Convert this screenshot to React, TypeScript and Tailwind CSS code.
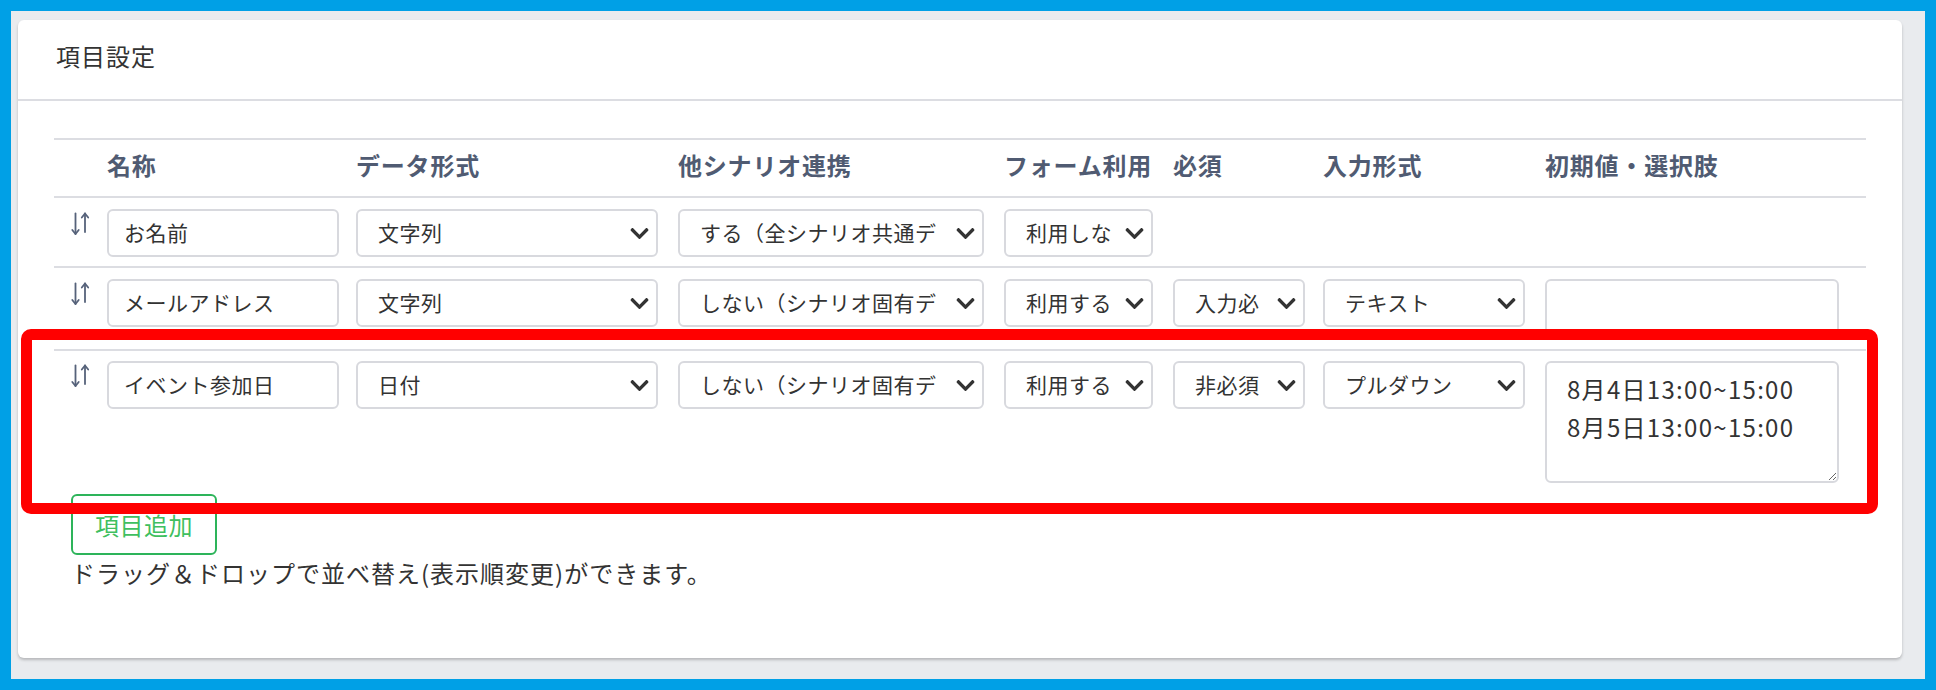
import React from "react";
import { FaChevronDown } from "react-icons/fa";

const FONT = "font-['Noto_Sans_CJK_JP','Noto_Sans',sans-serif]";

function DragIcon() {
  return (
    <svg width="19" height="24" viewBox="0 0 19 24" fill="none" stroke="#56627a" strokeWidth="1.8" strokeLinecap="round" strokeLinejoin="round">
      <line x1="4.5" y1="1.5" x2="4.5" y2="22" />
      <polyline points="1.3,18 4.5,22 7.7,18" />
      <line x1="14" y1="1.5" x2="14" y2="20" />
      <polyline points="10.8,5.5 14,1.5 17.2,5.5" />
    </svg>
  );
}

function TextInput({ value, w }: { value: string; w: string }) {
  return (
    <div className={`${w} h-[48px] border-2 border-[#d8d9de] rounded-[6px] bg-white flex items-center pl-[15px] text-[21px] tracking-[0.5px] text-[#333] whitespace-nowrap overflow-hidden`}>
      {value}
    </div>
  );
}

function Select({ value, w }: { value: string; w: string }) {
  return (
    <div className={`${w} h-[48px] border-2 border-[#d8d9de] rounded-[6px] bg-white flex items-center pl-[20px] text-[21px] tracking-[0.5px] text-[#333]`}>
      <span className="flex-1 min-w-0 overflow-hidden whitespace-nowrap">{value}</span>
      <span className="shrink-0 ml-[8px] mr-[6px] flex items-center text-[#333]">
        <FaChevronDown size={21} />
      </span>
    </div>
  );
}

function Area({ value, w, h }: { value: string; w: string; h: string }) {
  return (
    <textarea
      readOnly
      defaultValue={value}
      className={`${w} ${h} block border-2 border-[#d8d9de] rounded-[6px] bg-white pt-[7px] px-[20px] text-[24px] tracking-[1.3px] leading-[38px] text-[#333] outline-none overflow-hidden`}
    />
  );
}

const GRID = "grid grid-cols-[53px_249px_322px_326px_169px_150px_222px_321px]";

export default function App() {
  const headers = ["", "名称", "データ形式", "他シナリオ連携", "フォーム利用", "必須", "入力形式", "初期値・選択肢"];
  return (
    <div className={`relative w-[1936px] h-[690px] bg-[#00a0e6] p-[11px] ${FONT}`}>
      <div className="w-full h-full bg-[#e9ebee] pt-[9px] pl-[7px] pr-[23px] pb-[21px]">
        <div className="w-full h-full bg-white rounded-[6px] shadow-[0_2px_3px_rgba(0,0,0,0.22)] flex flex-col">
          <div className="h-[81px] border-b-2 border-[#dcdde2] flex items-center pl-[38px] pb-[8px] text-[24px] tracking-[1px] text-[#333]">
            項目設定
          </div>
          <div className="px-[36px] pt-[37px]">
            <div className="border-t-2 border-[#dcdde2]">
              <div className={`${GRID} h-[58px] items-center pb-[6px] text-[24px] tracking-[0.8px] font-bold text-[#505b72] border-b-2 border-[#dcdde2]`}>
                {headers.map((h, i) => (
                  <div key={i} className="whitespace-nowrap">{h}</div>
                ))}
              </div>
              {/* row 1 */}
              <div className={`${GRID} items-start pt-[11px] pb-[9px] border-b-2 border-[#dcdde2]`}>
                <div className="pl-[17px] pt-[3px]"><DragIcon /></div>
                <TextInput value="お名前" w="w-[232px]" />
                <Select value="文字列" w="w-[302px]" />
                <Select value="する（全シナリオ共通デ" w="w-[306px]" />
                <Select value="利用しな" w="w-[149px]" />
                <div />
                <div />
                <div />
              </div>
              {/* row 2 */}
              <div className={`${GRID} items-start pt-[11px] pb-[9px] border-b-2 border-[#dcdde2]`}>
                <div className="pl-[17px] pt-[3px]"><DragIcon /></div>
                <TextInput value="メールアドレス" w="w-[232px]" />
                <Select value="文字列" w="w-[302px]" />
                <Select value="しない（シナリオ固有デ" w="w-[306px]" />
                <Select value="利用する" w="w-[149px]" />
                <Select value="入力必" w="w-[132px]" />
                <Select value="テキスト" w="w-[202px]" />
                <Area value="" w="w-[294px]" h="h-[61px]" />
              </div>
              {/* row 3 */}
              <div className={`${GRID} items-start pt-[10px] pb-[10px]`}>
                <div className="pl-[17px] pt-[3px]"><DragIcon /></div>
                <TextInput value="イベント参加日" w="w-[232px]" />
                <Select value="日付" w="w-[302px]" />
                <Select value="しない（シナリオ固有デ" w="w-[306px]" />
                <Select value="利用する" w="w-[149px]" />
                <Select value="非必須" w="w-[132px]" />
                <Select value="プルダウン" w="w-[202px]" />
                <Area value={"8月4日13:00~15:00\n8月5日13:00~15:00"} w="w-[294px]" h="h-[122px]" />
              </div>
            </div>
            <div className="pl-[17px] pt-[1px]">
              <button className="w-[146px] h-[61px] border-2 border-[#2db45a] rounded-[6px] text-[24px] tracking-[0.5px] text-[#3fbf60] bg-white flex items-center justify-center">
                項目追加
              </button>
              <div className="h-[36px] leading-[36px] text-[24px] tracking-[1px] text-[#333] whitespace-nowrap">
                ドラッグ＆ドロップで並べ替え(表示順変更)ができます。
              </div>
            </div>
          </div>
        </div>
      </div>
      <div className="absolute left-[21px] top-[329px] w-[1857px] h-[185px] border-[11px] border-[#ff0000] rounded-[10px] pointer-events-none" />
    </div>
  );
}
